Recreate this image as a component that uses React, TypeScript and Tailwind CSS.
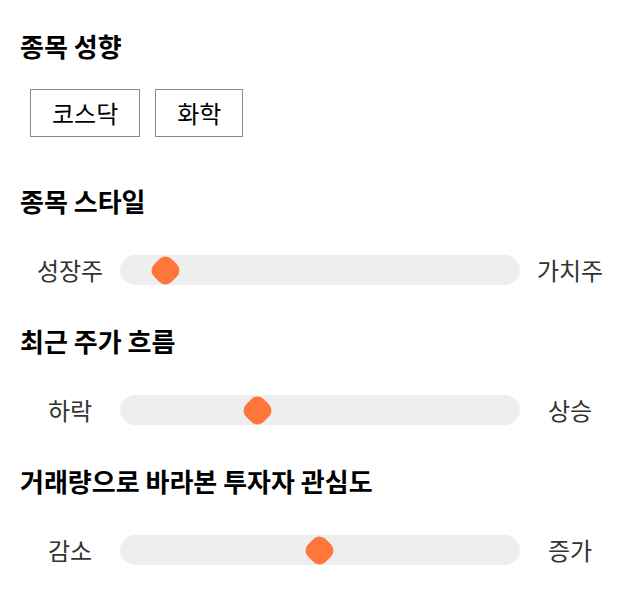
import React from 'react';

interface SliderRow {
  title: string;
  left: string;
  right: string;
  pos: number; // thumb centre, px from track start
}

const sliders: SliderRow[] = [
  { title: '종목 스타일', left: '성장주', right: '가치주', pos: 45 },
  { title: '최근 주가 흐름', left: '하락', right: '상승', pos: 137 },
  { title: '거래량으로 바라본 투자자 관심도', left: '감소', right: '증가', pos: 199 },
];

function Heading({ children }: { children: React.ReactNode }) {
  return <h2 className="text-[26px] leading-[32px] font-bold text-black">{children}</h2>;
}

function Slider({ left, right, pos }: { left: string; right: string; pos: number }) {
  return (
    <div className="flex items-center h-[30px]">
      <div className="w-[100px] text-center text-[24px] leading-[30px] text-[#333]">{left}</div>
      <div className="relative flex-1 h-[30px] rounded-full bg-[#eeeeee]">
        <div
          className="absolute top-[2.5px] w-[25px] h-[25px] rounded-[9px] rotate-45 bg-[#ff763b] -ml-[12.5px]"
          style={{ left: pos }}
        />
      </div>
      <div className="w-[100px] text-center text-[24px] leading-[30px] text-[#333]">{right}</div>
    </div>
  );
}

export default function App() {
  return (
    <div className="px-[20px] pt-[30px] pb-[40px] bg-white" style={{ fontFamily: '"Noto Sans CJK KR", "Noto Sans", sans-serif' }}>
      <Heading>종목 성향</Heading>
      <div className="mt-[27px] ml-[10px] flex gap-[15px]">
        {['코스닥', '화학'].map((t) => (
          <button key={t} className="h-[48px] px-[21px] border border-[#8a8a8a] text-[24px] leading-[30px] text-black">
            {t}
          </button>
        ))}
      </div>

      {sliders.map((s, i) => (
        <div key={s.title} className={i === 0 ? 'mt-[48px]' : 'mt-[40px]'}>
          <Heading>{s.title}</Heading>
          <div className="mt-[38px]">
            <Slider left={s.left} right={s.right} pos={s.pos} />
          </div>
        </div>
      ))}
    </div>
  );
}
